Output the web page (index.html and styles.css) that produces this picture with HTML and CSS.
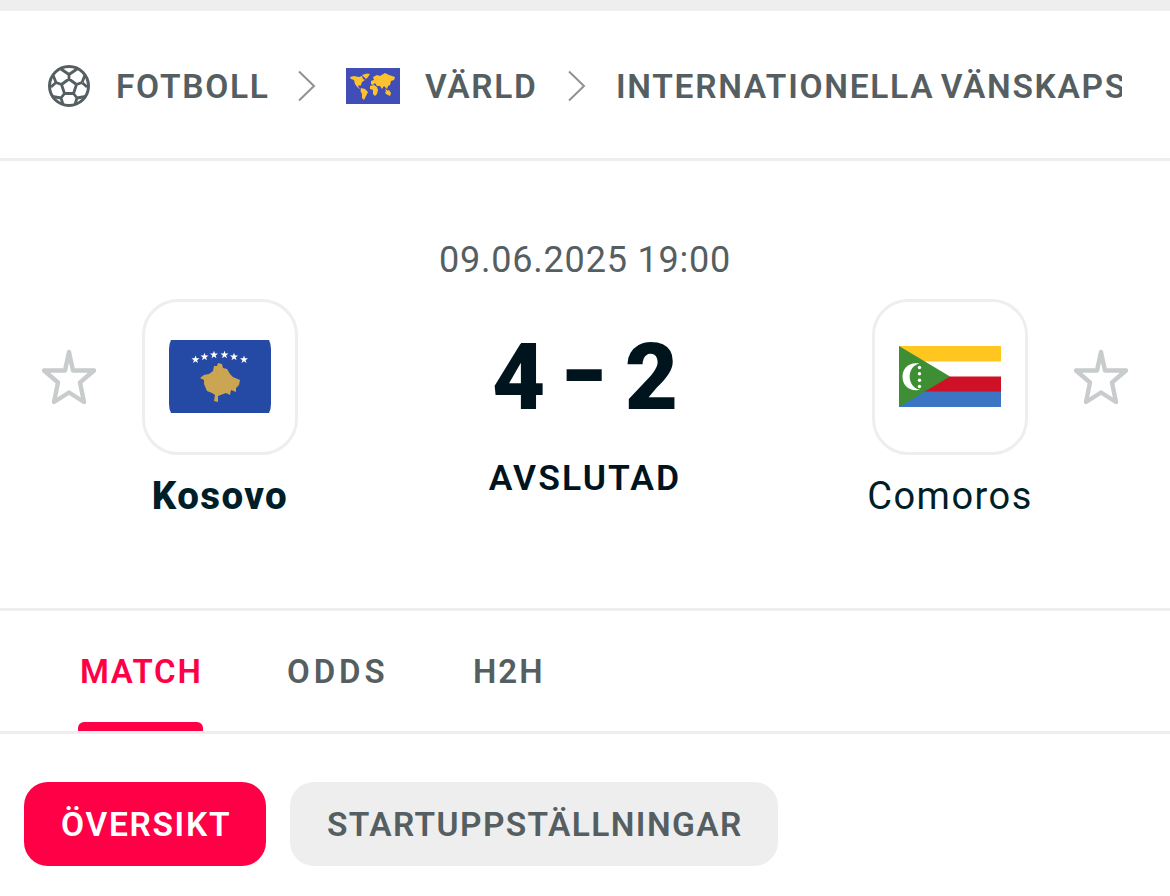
FILE: index.html
```html
<!DOCTYPE html>
<html lang="sv">
<head>
<meta charset="utf-8">
<title>Kosovo - Comoros</title>
<link rel="stylesheet" href="styles.css">
</head>
<body>
<div class="topbar"></div>
<nav class="crumbs">
  <svg class="ball" viewBox="0 0 42 42" fill="none" stroke="#555e61" stroke-width="2.8" stroke-linejoin="round">
    <circle cx="21" cy="21" r="19.5" stroke-width="3"/>
    <path d="M21 14L28.500 19.500L25.500 28.500H16.500L13.500 19.500ZM21 14V9.500M28.500 19.500L34 17.500M25.500 28.500L29 33M16.500 28.500L13 33M13.500 19.500L8 17.500M13 4L21 9.500L29 4M8 17.500L3 22M8 17.500L5 10M34 17.500L39 22M34 17.500L37 10M13.500 19.500L8 17.500M13 33L4.500 31.500M13 33L15 39.500M29 33L37.500 31.500M29 33L27 39.500"/>
  </svg>
  <span class="crumb sport">FOTBOLL</span>
  <svg class="chev" viewBox="0 0 18 32"><path d="M1 1.500L16 16L1 30.500"/></svg>
  <svg class="world" viewBox="0 0 54 36">
    <rect width="54" height="36" fill="#424eb7"/>
    <g fill="#fdc22d">
      <path d="M4 9L8 8L13 9L16 8L17 11L19 12L16 14L15 17L14 18L13 17L12 19L15 21L12 20L9 16L8 12L5 11Z"/>
      <path d="M16 7L21 5.500L24 6L22 9L20 11L18 9Z"/>
      <path d="M15 20L19 21L22 24L20 28L18 32L16 30V26L14.500 23Z"/>
      <path d="M24 18L28 17L31 19L32 22L31 26L29 28L27 26L27 22L24 21Z"/>
      <path d="M25 16V13L28 12L27 9L31 7L34 8L39 5L43 7L49 9L48 12L45 13L44 17L42 18L41 21L38 18L36 21L34 18L31 18L29 15L27 17Z"/>
      <path d="M39 24L43 22L45 25L44 28L40 26ZM39 21L41 22L42 23L40 23Z"/>
    </g>
  </svg>
  <span class="crumb country">VÄRLD</span>
  <svg class="chev" viewBox="0 0 18 32"><path d="M1 1.500L16 16L1 30.500"/></svg>
  <span class="crumb league">INTERNATIONELLA VÄNSKAPSMATCHER</span>
</nav>

<main class="duel">
  <svg class="star" viewBox="0 0 54 56"><path d="M27 3L31 21.500H52L38 33.500L42 53L27 43.500L12 53L16 33.500L2 21.500H23Z"/></svg>
  <section class="team">
    <div class="badge">
      <svg width="102" height="73" viewBox="0 0 102 73">
        <path d="M2 0H100Q102 4 102 9V64Q102 69 100 73H2Q0 69 0 64V9Q0 4 2 0Z" fill="#254aa5"/>
        <path d="M49 23L53 24L54 28L58 29L61 34L64 37L71 40L70 45L67 48L67 52L62 50L61 55L57 53L49 56V62L45 61L46 55L43 53L38 51L35 44L35 40L31 38L35 35L40 34L44 31L45 26L48 26Z" fill="#cca553"/>
        <defs><path id="st" d="M0-4L1-1.300L4-1.200L1.600.7L2.500 3.500L0 1.800L-2.500 3.500L-1.600.7L-4-1.200L-1-1.300Z" fill="#fff"/></defs>
        <use href="#st" x="26.500" y="19.500"/><use href="#st" x="35.500" y="16.800"/><use href="#st" x="45" y="14.700"/><use href="#st" x="55.500" y="14.700"/><use href="#st" x="65" y="16.800"/><use href="#st" x="75" y="19.500"/>
      </svg>
    </div>
    <div class="name winner">Kosovo</div>
  </section>
  <section class="middle">
    <div class="date">09.06.2025 19:00</div>
    <div class="score"><span>4</span><span class="dash">-</span><span>2</span></div>
    <div class="status">AVSLUTAD</div>
  </section>
  <section class="team">
    <div class="badge">
      <svg width="102" height="61" viewBox="0 0 102 61">
        <rect width="102" height="61" fill="#fff"/>
        <rect width="102" height="15.500" fill="#ffc61f"/>
        <rect y="30.500" width="102" height="15.500" fill="#ce1126"/>
        <rect y="45.500" width="102" height="15.500" fill="#3b75c4"/>
        <path d="M0 0L51 30.500L0 61Z" fill="#3e8e34"/>
        <path d="M20.500 17.500C9 15.500 3.500 23 3.500 30.700C3.500 38.500 9 46 21.500 43.800C7.500 41.500 7 20.500 20.500 17.500Z" fill="#fff"/>
        <g fill="#fff"><circle cx="20.500" cy="21.500" r="1.700"/><circle cx="20.500" cy="27.800" r="1.700"/><circle cx="20.500" cy="34.200" r="1.700"/><circle cx="20.500" cy="40.500" r="1.700"/></g>
      </svg>
    </div>
    <div class="name">Comoros</div>
  </section>
  <svg class="star" viewBox="0 0 54 56"><path d="M27 3L31 21.500H52L38 33.500L42 53L27 43.500L12 53L16 33.500L2 21.500H23Z"/></svg>
</main>

<nav class="tabs">
  <a class="tab active"><span>MATCH</span></a>
  <a class="tab odds">ODDS</a>
  <a class="tab h2h">H2H</a>
</nav>
<div class="pills">
  <a class="pill selected">ÖVERSIKT</a>
  <a class="pill lineups">STARTUPPSTÄLLNINGAR</a>
</div>
</body>
</html>
```
FILE: styles.css
```css
* { box-sizing: border-box; }
body {
  margin: 0;
  width: 1170px;
  height: 896px;
  overflow: hidden;
  background: #fff;
  color: #001e28;
  font-family: Roboto, "Liberation Sans", sans-serif;
}
svg { display: block; flex: none; }
.topbar { height: 11px; background: #eee; }
.crumbs {
  display: flex;
  align-items: center;
  height: 150px;
  padding: 3px 48px 0;
  border-bottom: 3px solid #eee;
  color: #555e61;
}
.crumb {
  flex: none;
  padding-top: 2px;
  white-space: nowrap;
  font-size: 33.5px;
  line-height: 44px;
  font-weight: 600;
  letter-spacing: 1.7px;
}
.ball { width: 42px; height: 42px; }
.sport { width: 182px; margin-left: 26px; }
.chev { width: 18px; height: 32px; fill: none; stroke: #8f9192; stroke-width: 2; }
.world { width: 54px; height: 36px; margin-left: 30px; }
.country { width: 143px; margin-left: 25px; }
.league { flex: 1; min-width: 0; margin-left: 30px; overflow: hidden; word-spacing: -3.5px; }

.duel {
  display: grid;
  grid-template-columns: 54px 156px 1fr 156px 54px;
  column-gap: 46px;
  height: 450px;
  padding: 0 42px;
  border-bottom: 3px solid #eee;
}
.star {
  width: 54px;
  height: 56px;
  margin-top: 188px;
  fill: none;
  stroke: #c8cccd;
  stroke-width: 4.4;
  stroke-linejoin: round;
}
.team { display: flex; flex-direction: column; align-items: center; padding-top: 138px; }
.badge {
  display: flex;
  align-items: center;
  justify-content: center;
  width: 156px;
  height: 156px;
  padding-bottom: 1px;
  border: 3px solid #eee;
  border-radius: 36px;
}
.name { margin-top: 17px; font-size: 38px; line-height: 48px; letter-spacing: 1.5px; white-space: nowrap; }
.winner { font-size: 38.5px; font-weight: 800; letter-spacing: 1.4px; }
.middle { display: flex; flex-direction: column; align-items: center; padding-top: 76px; }
.date { font-size: 36px; line-height: 46px; color: #555e61; letter-spacing: 0.8px; }
.score {
  display: flex;
  justify-content: center;
  gap: 19px;
  margin-top: 41px;
  color: #00141e;
  font-size: 92px;
  line-height: 108px;
  font-weight: 900;
}
.dash { transform: translateY(-5px) scaleX(1.3); }
.status { margin-top: 23px; font-size: 35.5px; line-height: 46px; font-weight: 600; letter-spacing: 2.1px; color: #00141e; }

.tabs {
  display: flex;
  height: 123px;
  padding-left: 78px;
  border-bottom: 3px solid #eee;
  color: #555e61;
  font-size: 33px;
  font-weight: 600;
  letter-spacing: 2px;
}
.tab { padding-top: 39px; line-height: 44px; white-space: nowrap; }
.active { display: flex; flex-direction: column; width: 125px; color: #ff0046; padding-left: 2px; letter-spacing: 1.7px; }
.active::after { content: ""; height: 9px; margin: 28px 0 0 -2px; border-radius: 6px 6px 0 0; background: #ff0046; }
.odds { width: 186px; margin-left: 84px; letter-spacing: 3.9px; }
.pills { display: flex; gap: 24px; padding: 48px 24px 0; }
.pill {
  display: flex;
  width: 242px;
  height: 84px;
  padding: 1px 0 0 37px;
  align-items: center;
  border-radius: 24px;
  font-size: 33.5px;
  font-weight: 600;
  letter-spacing: 1.7px;
  white-space: nowrap;
}
.selected { background: #ff0046; color: #fff; }
.lineups { width: 488px; background: #eee; color: #555e61; letter-spacing: 1.4px; }
```
